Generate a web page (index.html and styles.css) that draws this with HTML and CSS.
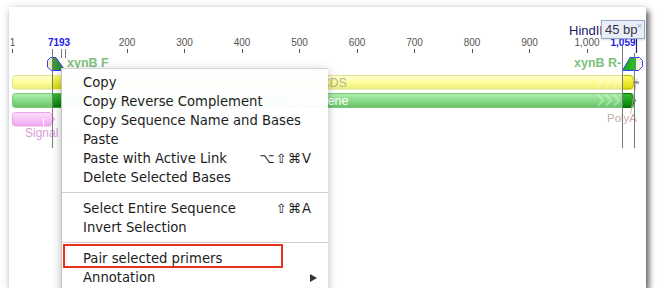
FILE: index.html
```html
<!DOCTYPE html>
<html lang="en">
<head>
  <meta charset="UTF-8" />
  <title>Sequence Map – Context Menu</title>
  <link rel="stylesheet" href="styles.css">
</head>
<body>
  <section class="map-panel">
    <svg class="map-canvas" width="637" height="281" viewBox="9 7 637 281">
      <defs>
        <linearGradient id="yellowPale" x1="0" y1="0" x2="0" y2="1">
          <stop offset="0" stop-color="#ffffd6"/>
          <stop offset="0.45" stop-color="#ffffa0"/>
          <stop offset="1" stop-color="#eeee78"/>
        </linearGradient>
        <linearGradient id="yellowSel" x1="0" y1="0" x2="0" y2="1">
          <stop offset="0" stop-color="#ffff70"/>
          <stop offset="1" stop-color="#dada00"/>
        </linearGradient>
        <linearGradient id="greenPale" x1="0" y1="0" x2="0" y2="1">
          <stop offset="0" stop-color="#aeeeae"/>
          <stop offset="0.5" stop-color="#8adc8a"/>
          <stop offset="1" stop-color="#66c066"/>
        </linearGradient>
        <linearGradient id="greenSel" x1="0" y1="0" x2="0" y2="1">
          <stop offset="0" stop-color="#30c030"/>
          <stop offset="1" stop-color="#067a06"/>
        </linearGradient>
        <linearGradient id="pinkBar" x1="0" y1="0" x2="0" y2="1">
          <stop offset="0" stop-color="#fde0fd"/>
          <stop offset="1" stop-color="#f0a6f0"/>
        </linearGradient>
        <linearGradient id="primerFwd" x1="0" y1="0" x2="1" y2="0">
          <stop offset="0" stop-color="#eef4d0"/>
          <stop offset="0.32" stop-color="#dfeabc"/>
          <stop offset="0.34" stop-color="#3c9a3c"/>
          <stop offset="1" stop-color="#1e7e1e"/>
        </linearGradient>
        <linearGradient id="primerRev" x1="0" y1="0" x2="1" y2="0">
          <stop offset="0" stop-color="#10a810"/>
          <stop offset="0.68" stop-color="#30c030"/>
          <stop offset="0.7" stop-color="#e6f6d8"/>
          <stop offset="1" stop-color="#f4faee"/>
        </linearGradient>
      </defs>

      <!-- ruler -->
      <g class="ruler-labels">
        <text x="12.6" y="46">1</text>
        <text x="127" y="46">200</text>
        <text x="184.6" y="46">300</text>
        <text x="242" y="46">400</text>
        <text x="299.6" y="46">500</text>
        <text x="357" y="46">600</text>
        <text x="414.6" y="46">700</text>
        <text x="472" y="46">800</text>
        <text x="529.6" y="46">900</text>
        <text x="587" y="46">1,000</text>
      </g>
      <g class="ruler-ticks">
        <line x1="12.5" y1="49" x2="12.5" y2="53"/>
        <line x1="127.5" y1="49" x2="127.5" y2="53"/>
        <line x1="184.5" y1="49" x2="184.5" y2="53"/>
        <line x1="242.5" y1="49" x2="242.5" y2="53"/>
        <line x1="299.5" y1="49" x2="299.5" y2="53"/>
        <line x1="357.5" y1="49" x2="357.5" y2="53"/>
        <line x1="414.5" y1="49" x2="414.5" y2="53"/>
        <line x1="472.5" y1="49" x2="472.5" y2="53"/>
        <line x1="529.5" y1="49" x2="529.5" y2="53"/>
        <line x1="587.5" y1="49" x2="587.5" y2="53"/>
      </g>
      <text class="pos-label" x="59" y="46">7193</text>
      <text class="pos-label" x="623" y="46">1,059</text>

      <!-- HindIII site -->
      <text class="site-label" x="569" y="35">HindIII</text>
      <line class="site-line" x1="636.5" y1="38" x2="636.5" y2="53"/>

      <!-- features -->
      <rect x="12.5" y="75.5" width="622" height="13.5" rx="3" fill="url(#yellowPale)" stroke="#e2e28c"/>
      <rect x="52.5" y="75.5" width="10" height="13.5" fill="url(#yellowSel)"/>
      <path d="M622.5 75.5 H631 L635.5 82.2 L631 89 H622.5 Z" fill="url(#yellowSel)" stroke="#b8b800"/>
      <path class="chevron" d="M598 77 L603 82 L598 87 M606 77 L611 82 L606 87 M614 77 L619 82 L614 87"/>
      <text class="cds-label" x="318" y="86.5">xynB CDS</text>

      <rect x="12.5" y="93.5" width="622" height="14" rx="3" fill="url(#greenPale)" stroke="#78c878"/>
      <rect x="52.5" y="93.5" width="10" height="14" fill="url(#greenSel)"/>
      <path d="M622.5 93.5 H631 L635.5 100.5 L631 107.5 H622.5 Z" fill="url(#greenSel)" stroke="#056805"/>
      <path class="chevron" d="M598 95 L603 100.5 L598 106 M606 95 L611 100.5 L606 106 M614 95 L619 100.5 L614 106"/>
      <text class="gene-label" x="319" y="105">xynB gene</text>

      <path d="M15.5 112.5 H50 L54.5 119.2 L50 126 H15.5 Q12.5 126 12.5 123 V115.5 Q12.5 112.5 15.5 112.5 Z" fill="url(#pinkBar)" stroke="#e6a6e6"/>
      <line x1="43.5" y1="118" x2="43.5" y2="126" stroke="#ffffff"/>
      <text class="signal-label" x="25" y="137">Signal peptide</text>

      <line class="polya-line" x1="637" y1="79" x2="630.5" y2="114"/>
      <line x1="633" y1="82.5" x2="639" y2="82.5" stroke="#8a8a8a" stroke-width="2"/>
      <text class="polya-label" x="607" y="122">PolyA</text>

      <!-- primers -->
      <path d="M47.5 60.5 L50.5 57.5 H56 L65 70.5 H51 L47.5 67 Z" fill="url(#primerFwd)" stroke="#3c3cff"/>
      <text class="primer-label" x="67" y="67">xynB F</text>
      <path d="M622.5 70.5 L630 57.5 H639.5 L642.5 60.5 V66.5 L638.5 70.5 Z" fill="url(#primerRev)" stroke="#3c3cff"/>
      <text class="primer-label" x="574" y="67">xynB R-</text>

      <!-- selection guides -->
      <g class="guides">
        <line x1="52.5" y1="49" x2="52.5" y2="148"/>
        <line x1="61.5" y1="49" x2="61.5" y2="58"/>
        <line x1="65.5" y1="49" x2="65.5" y2="58"/>
        <line x1="622.5" y1="45" x2="622.5" y2="148"/>
        <line x1="634.5" y1="53" x2="634.5" y2="148"/>
      </g>
    </svg>

    <div class="size-tip">45 bp<span class="tip-close">×</span></div>

    <div class="context-menu">
      <div class="menu-item">Copy</div>
      <div class="menu-item">Copy Reverse Complement</div>
      <div class="menu-item">Copy Sequence Name and Bases</div>
      <div class="menu-item">Paste</div>
      <div class="menu-item">Paste with Active Link<span class="shortcut">⌥⇧⌘V</span></div>
      <div class="menu-item">Delete Selected Bases</div>
      <div class="menu-sep"></div>
      <div class="menu-item">Select Entire Sequence<span class="shortcut">⇧⌘A</span></div>
      <div class="menu-item">Invert Selection</div>
      <div class="menu-sep"></div>
      <div class="menu-item">Pair selected primers</div>
      <div class="menu-item">Annotation<span class="submenu-arrow"></span></div>
      <div class="highlight-box"></div>
    </div>
  </section>
</body>
</html>
```

FILE: styles.css
```css
body {
  margin: 0;
  padding: 7px 0 0 9px;
  background-color: #fff;
  font-family: 'DejaVu Sans', sans-serif;
}

.map-panel {
  position: relative;
  width: 637px;
  height: 281px;
  background: #fff;
  overflow: hidden;
  box-shadow: 3px 4px 6px rgba(0, 0, 0, 0.6), 0 0 9px rgba(0, 0, 0, 0.12);
}

.map-canvas {
  position: absolute;
  top: 0;
  left: 0;
  display: block;
}

.ruler-labels text {
  font-family: 'Liberation Sans', sans-serif;
  font-size: 10px;
  fill: #555;
  text-anchor: middle;
}

.ruler-ticks line {
  stroke: #555;
  stroke-width: 1;
}

.pos-label {
  font-family: 'Liberation Sans', sans-serif;
  font-size: 10px;
  font-weight: 700;
  fill: #1c1cf0;
  text-anchor: middle;
}

.site-label {
  font-family: 'Liberation Sans', sans-serif;
  font-size: 13px;
  fill: #20206a;
}

.site-line {
  stroke: #20206a;
  stroke-width: 1.2;
}

.chevron {
  fill: none;
  stroke: rgba(255, 255, 255, 0.3);
  stroke-width: 2;
}

.cds-label,
.gene-label {
  font-family: 'Liberation Sans', sans-serif;
  font-size: 12.5px;
  text-anchor: middle;
}

.cds-label { fill: #b4b49a; }
.gene-label { fill: #ffffff; }

.signal-label {
  font-family: 'Liberation Sans', sans-serif;
  font-size: 12px;
  fill: #d69cd6;
}

.polya-label {
  font-family: 'Liberation Sans', sans-serif;
  font-size: 11.5px;
  fill: #c9afa6;
}

.polya-line {
  stroke: #caa99c;
  stroke-width: 0.8;
}

.primer-label {
  font-family: 'Liberation Sans', sans-serif;
  font-size: 12.5px;
  font-weight: 700;
  fill: #7cc27c;
}

.guides line {
  stroke: #7a7a7a;
  stroke-width: 1;
}

/* size tooltip */
.size-tip {
  position: absolute;
  left: 592px;
  top: 13px;
  width: 44px;
  height: 19px;
  box-sizing: border-box;
  padding-left: 3px;
  background: #e8eef9;
  border: 1px solid #9aa9c6;
  font-family: 'Liberation Sans', sans-serif;
  font-size: 13px;
  line-height: 17px;
  color: #363646;
  box-shadow: 0 1px 2px rgba(0, 0, 0, 0.15);
}

.tip-close {
  position: absolute;
  top: -3px;
  right: 2px;
  font-size: 9px;
  color: #a0a8b8;
}

/* context menu */
.context-menu {
  position: absolute;
  left: 52px;
  top: 61px;
  width: 267px;
  box-sizing: border-box;
  padding: 4px 0 12px;
  background: rgba(255, 255, 255, 0.96);
  border-left: 1px solid #c4c4c4;
  border-top: 1px solid #d4d4d4;
  box-shadow: 0 3px 9px rgba(0, 0, 0, 0.28);
  font-size: 13.2px;
  color: #1c1c1c;
}

.menu-item {
  display: flex;
  justify-content: space-between;
  align-items: center;
  height: 19px;
  line-height: 19px;
  padding: 0 16px 0 21px;
  white-space: nowrap;
}

.shortcut {
  letter-spacing: 1px;
}

.submenu-arrow {
  width: 0;
  height: 0;
  margin-right: -5px;
  border-left: 7px solid #333;
  border-top: 4px solid transparent;
  border-bottom: 4px solid transparent;
}

.menu-sep {
  height: 1px;
  margin: 5px 0 6px;
  background: #d0d0d0;
}

.highlight-box {
  position: absolute;
  left: 1px;
  top: 175px;
  width: 220px;
  height: 24px;
  box-sizing: border-box;
  border: 2px solid #e8321c;
}
```
